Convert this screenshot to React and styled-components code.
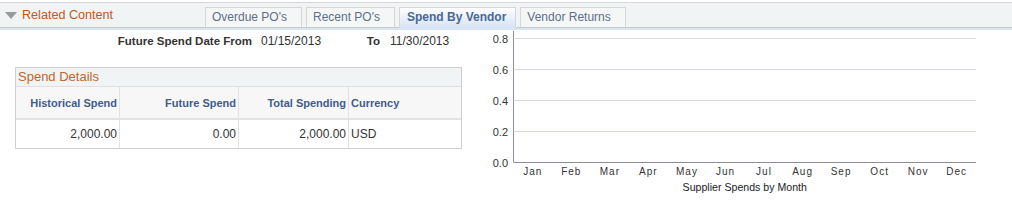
import React from 'react'
import styled, { createGlobalStyle } from 'styled-components'

const Global = createGlobalStyle`
body{
    margin:0;
    background:#fff;
    font-family:"Liberation Sans", Arial, sans-serif;
    color:#333;
}
`

const Page = styled.div`
width:1012px;
height:215px;
padding-top:2px;
box-sizing:border-box;
overflow:hidden;
`

const Bar = styled.div`
display:flex;
align-items:stretch;
height:24px;
background:#f0f4f4;
border-top:1px solid #d6d6d6;
border-bottom:1px solid #c9c9c9;
box-shadow:0 2px 0 #d8e5f5;
position:relative;
`

const Toggle = styled.div`
display:flex;
align-items:center;
width:205px;
padding-left:5px;
box-sizing:border-box;
color:#c05a1d;
font-size:12.6px;
`

const Arrow = styled.span`
width:0;
height:0;
border-left:6px solid transparent;
border-right:6px solid transparent;
border-top:7px solid #9a9a9a;
margin-right:5px;
`

const Tabs = styled.div`
display:flex;
gap:4px;
align-items:flex-end;
`

const Tab = styled.div`
line-height:19px;
border:1px solid #d6d6d6;
border-bottom:none;
font-size:12px;
color:${p => p.active ? '#4a6897' : '#5d6f8b'};
font-weight:${p => p.active ? 'bold' : 'normal'};
background:${p => p.active ? 'linear-gradient(#fdfeff, #d6e3f4)' : '#f5f7f7'};
margin-bottom:${p => p.active ? '-1px' : '0'};
height:${p => p.active ? '20px' : '19px'};
padding:${p => p.active ? '0 9px 0 7px' : '0 14px 0 6px'};
`

const Body = styled.div`
display:flex;
margin-top:3px;
`

const Left = styled.div`
width:480px;
padding-left:15px;
box-sizing:border-box;
`

const DateRow = styled.div`
display:flex;
align-items:center;
height:16px;
margin-top:2px;
font-size:12px;
`

const Label = styled.span`
width:${p => p.w}px;
text-align:right;
font-weight:bold;
font-size:11.5px;
color:#333;
`

const Value = styled.span`
width:${p => p.w}px;
margin-left:${p => p.ml}px;
color:#333;
`

const Box = styled.div`
width:447px;
margin-top:18px;
border:1px solid #cfcfcf;
box-sizing:border-box;
`

const BoxTitle = styled.div`
height:18px;
line-height:18px;
padding-left:2px;
background:#f0f4f4;
color:#c4652a;
font-size:13px;
border-bottom:1px solid #dfdfdf;
`

const Table = styled.div`
display:grid;
grid-template-columns:104px 119px 110px 1fr;
`

const Head = styled.div`
height:31px;
display:flex;
align-items:center;
justify-content:${p => p.left ? 'flex-start' : 'flex-end'};
padding:0 2px;
background:#f7f7f7;
border-right:${p => p.last ? 'none' : '1px solid #e2e2e2'};
border-bottom:2px solid #e2e2e2;
font-size:11px;
font-weight:bold;
color:#3f5d8d;
`

const Cell = styled.div`
height:28px;
display:flex;
align-items:center;
justify-content:${p => p.left ? 'flex-start' : 'flex-end'};
padding:0 2px;
background:#fff;
border-right:${p => p.last ? 'none' : '1px solid #e2e2e2'};
font-size:12px;
color:#333;
`

const Chart = styled.svg`
display:block;
width:532px;
height:185px;
font-family:"Liberation Sans", Arial, sans-serif;
`

const months = ['Jan','Feb','Mar','Apr','May','Jun','Jul','Aug','Sep','Oct','Nov','Dec']
const ticks = ['0.8','0.6','0.4','0.2','0.0']

const cols = [
    { h: 'Historical Spend', v: '2,000.00' },
    { h: 'Future Spend', v: '0.00' },
    { h: 'Total Spending', v: '2,000.00' },
    { h: 'Currency', v: 'USD', left: true, last: true },
]

function SpendChart() {
    // chart origin: page x 480, page y 30
    const x0 = 33.5, x1 = 496, top = 7, step = 31
    const colW = (x1 - x0) / 12
    return (
        <Chart viewBox="0 0 532 185">
            <line x1={x0} y1={0} x2={x0} y2={top + step * 4} stroke="#8c8c99" strokeWidth="1" />
            {ticks.map((t, i) => {
                const y = top + step * i + 0.5
                return (
                    <g key={t}>
                        {i < 4 && <line x1={x0} y1={y} x2={x1} y2={y} stroke="#dadae6" strokeWidth="1" />}
                        <text x={28} y={y + 4} fontSize="11" fill="#333" textAnchor="end">{t}</text>
                    </g>
                )
            })}
            <line x1={x0} y1={top + step * 4 + 0.5} x2={x1} y2={top + step * 4 + 0.5} stroke="#8c8c99" strokeWidth="1" />
            {months.map((m, i) => (
                <text key={m} x={x0 + colW * (i + 0.5)} y={144} fontSize="10" letterSpacing="1" fill="#333" textAnchor="middle">{m}</text>
            ))}
            <text x={(x0 + x1) / 2} y={160} fontSize="10.6" fill="#222" textAnchor="middle">Supplier Spends by Month</text>
        </Chart>
    )
}

export default function App() {
    return (
        <Page>
            <Global />
            <Bar>
                <Toggle><Arrow />Related Content</Toggle>
                <Tabs>
                    <Tab>Overdue PO's</Tab>
                    <Tab>Recent PO's</Tab>
                    <Tab active>Spend By Vendor</Tab>
                    <Tab>Vendor Returns</Tab>
                </Tabs>
            </Bar>
            <Body>
                <Left>
                    <DateRow>
                        <Label w={237}>Future Spend Date From</Label>
                        <Value w={98} ml={9}>01/15/2013</Value>
                        <Label w={21}>To</Label>
                        <Value ml={10}>11/30/2013</Value>
                    </DateRow>
                    <Box>
                        <BoxTitle>Spend Details</BoxTitle>
                        <Table>
                            {cols.map(c => <Head key={c.h} left={c.left} last={c.last}>{c.h}</Head>)}
                            {cols.map(c => <Cell key={c.h} left={c.left} last={c.last}>{c.v}</Cell>)}
                        </Table>
                    </Box>
                </Left>
                <SpendChart />
            </Body>
        </Page>
    )
}
